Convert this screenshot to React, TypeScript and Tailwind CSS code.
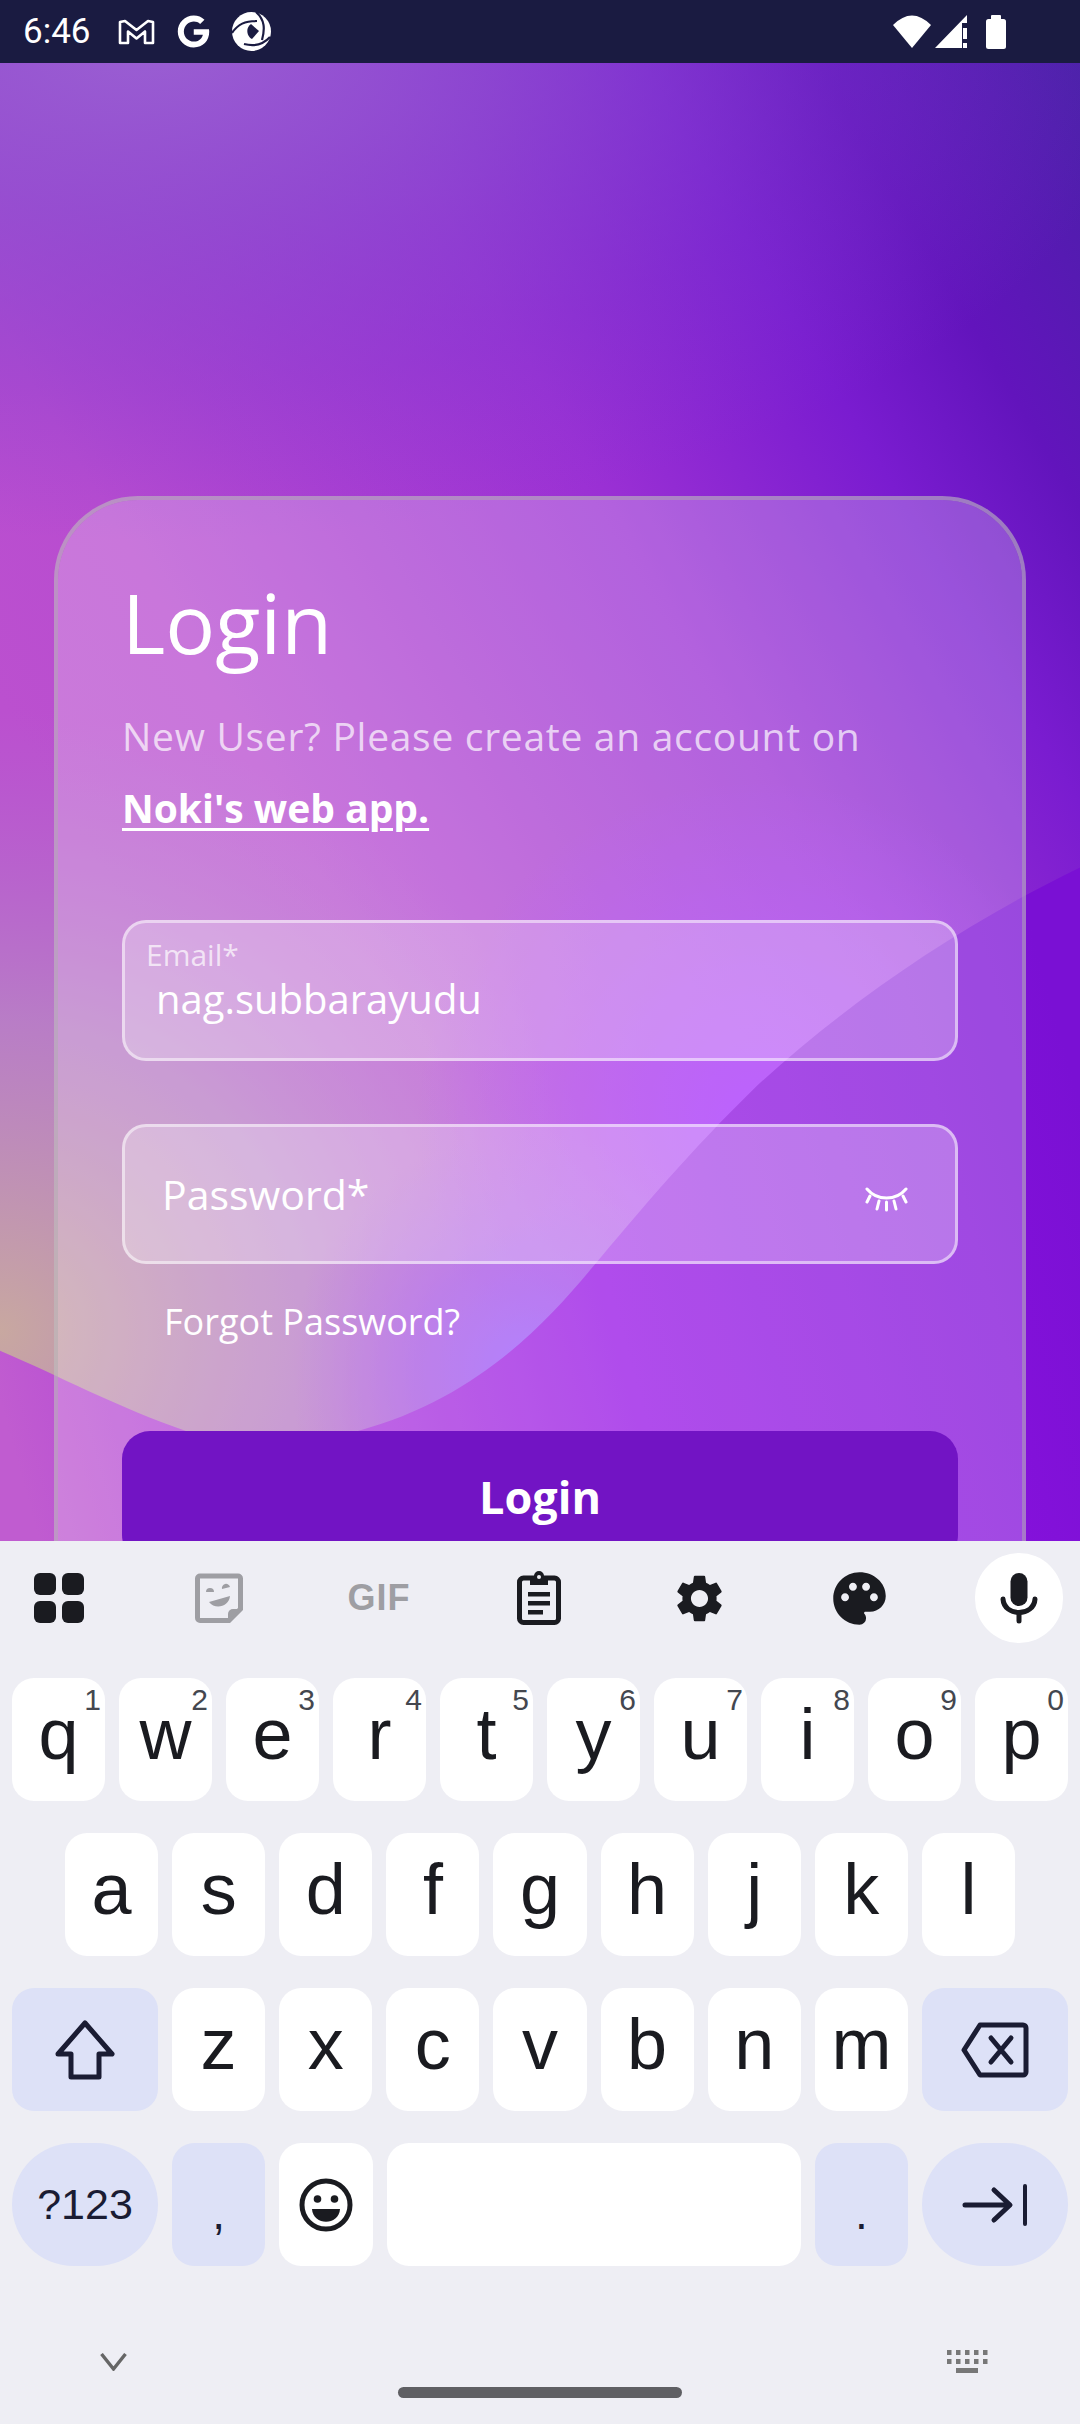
import React from "react";
import { MdPalette, MdSettings } from "react-icons/md";
import { FaGoogle } from "react-icons/fa";

const INK = "#1a1b20";

function Background() {
  return (
    <svg className="absolute inset-0 w-full h-full" viewBox="0 63 1080 1477" preserveAspectRatio="none">
      <defs>
        <linearGradient id="base" gradientUnits="userSpaceOnUse" x1="1080" y1="63" x2="0" y2="700">
          <stop offset="0" stopColor="#4a20a8" />
          <stop offset="0.18" stopColor="#6214bc" />
          <stop offset="0.3" stopColor="#7a1cd0" />
          <stop offset="0.5" stopColor="#9a30d4" />
          <stop offset="0.85" stopColor="#b84cd0" />
          <stop offset="1" stopColor="#bb50cf" />
        </linearGradient>
        <radialGradient id="tl" gradientUnits="userSpaceOnUse" cx="150" cy="40" r="1000" gradientTransform="translate(150 40) scale(1 0.5) translate(-150 -40)">
          <stop offset="0" stopColor="#9a62d2" stopOpacity="0.95" />
          <stop offset="0.35" stopColor="#8c50d0" stopOpacity="0.72" />
          <stop offset="0.7" stopColor="#8040d0" stopOpacity="0.32" />
          <stop offset="1" stopColor="#8040d0" stopOpacity="0" />
        </radialGradient>
        <radialGradient id="violet" gradientUnits="userSpaceOnUse" cx="757" cy="1120" r="340">
          <stop offset="0" stopColor="#a832ff" stopOpacity="1" />
          <stop offset="1" stopColor="#a832ff" stopOpacity="0" />
        </radialGradient>
        <radialGradient id="violet2" gradientUnits="userSpaceOnUse" cx="530" cy="1370" r="240">
          <stop offset="0" stopColor="#9a5cff" stopOpacity="1" />
          <stop offset="0.5" stopColor="#a050f0" stopOpacity="0.6" />
          <stop offset="1" stopColor="#a850e8" stopOpacity="0" />
        </radialGradient>
        <radialGradient id="tan" gradientUnits="userSpaceOnUse" cx="0" cy="1330" r="620">
          <stop offset="0" stopColor="#c8a8a0" stopOpacity="1" />
          <stop offset="0.5" stopColor="#b888c4" stopOpacity="0.8" />
          <stop offset="1" stopColor="#b070d0" stopOpacity="0" />
        </radialGradient>
        <linearGradient id="wave" gradientUnits="userSpaceOnUse" x1="0" y1="1400" x2="1080" y2="1100">
          <stop offset="0" stopColor="#c05cd0" />
          <stop offset="0.55" stopColor="#9714e6" />
          <stop offset="1" stopColor="#7a10d4" />
        </linearGradient>
      </defs>
      <rect x="0" y="63" width="1080" height="1477" fill="url(#base)" />
      <rect x="0" y="63" width="1080" height="1477" fill="url(#tl)" />
      <rect x="0" y="63" width="1080" height="1477" fill="url(#tan)" />
      <rect x="0" y="63" width="1080" height="1477" fill="url(#violet)" />
      <rect x="0" y="63" width="1080" height="1477" fill="url(#violet2)" />
      <path
        d="M1080 867 C960 925 850 1000 757 1085 C690 1150 640 1210 592 1267 C540 1330 470 1400 358 1430 C290 1448 240 1448 186 1430 C120 1408 55 1373 0 1350 L0 1540 L1080 1540 Z"
        fill="url(#wave)"
      />
    </svg>
  );
}

function StatusBar() {
  return (
    <div className="h-[63px] bg-[#1a1b41] flex items-center text-white shrink-0">
      <span className="ml-[23px] w-[68px] font-[Roboto,sans-serif] text-[35px] leading-[40px]">6:46</span>
      <svg className="ml-[27px]" width="37" height="26" viewBox="0 0 37 26" fill="none" stroke="white" strokeWidth="2.6" strokeLinejoin="round">
        <path d="M2 3 L2 24 H10 V12.5 L18.5 19.5 L27 12.5 V24 H35 V3 L30 2 L18.5 11 L7 2 Z" />
      </svg>
      <FaGoogle className="ml-[22px]" size={33} />
      <svg className="ml-[22px]" width="39" height="39" viewBox="0 0 39 39">
        <circle cx="19.5" cy="19.5" r="19.5" fill="white" />
        <path d="M19 12 L27 19 L20 27 C15 25 13 16 19 12 Z" fill="#1a1b41" />
        <path d="M0 21 C6 12 13 9 25 9 M24 0 C33 8 33 17 30 28 M38 25 C30 34 20 34 12 32" fill="none" stroke="#1a1b41" strokeWidth="2.2" />
      </svg>
      <div className="ml-auto flex items-center">
        <svg width="38" height="33" viewBox="0 0 38 33">
          <path d="M0 10 Q19 -9 38 10 L19 33 Z" fill="white" />
        </svg>
        <svg className="ml-[4px]" width="32" height="33" viewBox="0 0 32 33" fill="white">
          <path d="M0 33 L32 0 V8 H27 V33 Z" />
          <rect x="28" y="13" width="4" height="11" />
          <rect x="28" y="28" width="4" height="5" />
        </svg>
        <svg className="ml-[19px] mr-[74px]" width="20" height="34" viewBox="0 0 20 34" fill="white">
          <rect x="5" y="0" width="10" height="6" rx="1" />
          <rect x="0" y="4" width="20" height="30" rx="2.5" />
        </svg>
      </div>
    </div>
  );
}

function Eye() {
  return (
    <svg className="mt-[10px]" width="43" height="25" viewBox="0 0 43 25" fill="none" stroke="white" strokeWidth="3" strokeLinecap="round">
      <path d="M2 2 C12 14 31 14 41 2" />
      <path d="M5 9 L2 15 M14 14 L12 22 M21.5 15 V23 M29 14 L31 22 M38 9 L41 15" />
    </svg>
  );
}

function LoginCard() {
  return (
    <div className="relative mx-[54px] mt-[433px] rounded-[84px] border-4 border-[rgba(190,190,190,0.6)] bg-white/[.24] bg-clip-padding px-[64px] pt-[72px] font-['Open_Sans',sans-serif] text-white h-[1300px]">
      <h1 className="text-[83px] leading-[100px] font-normal">Login</h1>
      <p className="mt-[28px] text-[39px] leading-[72px] font-normal tracking-[0.7px] text-white/70">New User? Please create an account on</p>
      <a className="block text-[39px] leading-[72px] font-bold underline decoration-[3px] underline-offset-[5px]">Noki's web app.</a>
      <div className="mt-[76px] h-[141px] rounded-[24px] border-[3px] border-white/50 bg-white/25 pl-[21px] pt-[14px]">
        <div className="text-[30px] leading-[36px] text-white/70">Email*</div>
        <div className="mt-[2px] ml-[10px] text-[40px] leading-[48px]">nag.subbarayudu</div>
      </div>
      <div className="mt-[63px] h-[140px] rounded-[24px] border-[3px] border-white/50 bg-white/25 pl-[37px] pr-[47px] flex items-center justify-between">
        <span className="text-[41px] leading-[52px]">Password*</span>
        <Eye />
      </div>
      <div className="mt-[36px] ml-[42px] text-[36px] leading-[44px]">Forgot Password?</div>
      <button className="mt-[87px] w-full h-[132px] rounded-[28px] bg-[#7214c4] text-[45px] font-bold text-white">Login</button>
    </div>
  );
}

function Key({ label, hint, className = "" }: { label?: React.ReactNode; hint?: string; className?: string }) {
  return (
    <div className={`relative h-[123px] flex-1 rounded-[22px] bg-white flex items-center justify-center pb-[12px] text-[72px] text-[#1a1b20] ${className}`}>
      {label}
      {hint && <span className="absolute top-[7px] right-[4px] text-[30px] leading-[30px] text-[#44474f]">{hint}</span>}
    </div>
  );
}

function FnKey({ children, className = "" }: { children: React.ReactNode; className?: string }) {
  return <div className={`h-[123px] w-[146px] shrink-0 bg-[#dde1f7] flex items-center justify-center ${className}`}>{children}</div>;
}

function Toolbar() {
  const cell = "w-[88px] h-[90px] flex items-center justify-center";
  return (
    <div className="mt-[12px] pl-[15px] pr-[17px] flex items-center justify-between">
      <div className={cell}>
        <svg width="50" height="50" viewBox="0 0 50 50" fill={INK}>
          <rect x="0" y="0" width="22" height="22" rx="6" />
          <rect x="28" y="0" width="22" height="22" rx="6" />
          <rect x="0" y="28" width="22" height="22" rx="6" />
          <rect x="28" y="28" width="22" height="22" rx="6" />
        </svg>
      </div>
      <div className={cell}>
        <svg width="48" height="50" viewBox="0 0 48 50" fill="none">
          <path d="M5 3 H43 a2.5 2.5 0 0 1 2.5 2.5 V36 L34 47.5 H5 a2.5 2.5 0 0 1 -2.5 -2.5 V5.5 A2.5 2.5 0 0 1 5 3 Z" stroke="#9e9ea3" strokeWidth="5" />
          <path d="M33 47 V41 a5 5 0 0 1 5 -5 H46 Z" fill="#9e9ea3" />
          <path d="M11 19 a4 4 0 0 1 8 0 Z M27 16 a4 4 0 0 1 8 -2 Z M14 29 L35 23 C34 34 20 37 14 29 Z" fill="#9e9ea3" />
        </svg>
      </div>
      <div className={`${cell} font-['Liberation_Sans',sans-serif] font-bold text-[36px] tracking-[1px] text-[#9e9ea3]`}>GIF</div>
      <div className={cell}>
        <svg width="44" height="54" viewBox="0 0 44 54" fill="none">
          <rect x="2.5" y="7" width="39" height="44.5" rx="4" stroke={INK} strokeWidth="5" />
          <path d="M13 5 H17 a5 5 0 0 1 10 0 H31 V14 H13 Z" fill={INK} />
          <circle cx="22" cy="6" r="2" fill="#eeeef4" />
          <rect x="11" y="21" width="22" height="4.5" fill={INK} />
          <rect x="11" y="30" width="22" height="4.5" fill={INK} />
          <rect x="11" y="39" width="15" height="4.5" fill={INK} />
        </svg>
      </div>
      <div className={cell}>
        <MdSettings size={57} color={INK} />
      </div>
      <div className={cell}>
        <MdPalette size={63} color={INK} />
      </div>
      <div className={`${cell} rounded-full bg-white`}>
        <svg width="38" height="52" viewBox="0 0 38 52" fill="none">
          <rect x="10.5" y="1" width="17" height="33" rx="8.5" fill={INK} />
          <path d="M3 27 C4 45 34 45 35 27" stroke={INK} strokeWidth="5" strokeLinecap="round" />
          <path d="M19 42 V49" stroke={INK} strokeWidth="5" strokeLinecap="round" />
        </svg>
      </div>
    </div>
  );
}

function Keyboard() {
  const r1 = ["q", "w", "e", "r", "t", "y", "u", "i", "o", "p"];
  const h1 = ["1", "2", "3", "4", "5", "6", "7", "8", "9", "0"];
  const r2 = ["a", "s", "d", "f", "g", "h", "j", "k", "l"];
  const r3 = ["z", "x", "c", "v", "b", "n", "m"];
  return (
    <div className="flex-1 bg-[#eeeef4] font-['Liberation_Sans',sans-serif]">
      <Toolbar />
      <div className="mt-[35px] flex flex-col gap-[32px]">
        <div className="px-[12px] flex gap-[14px]">
          {r1.map((k, i) => (
            <Key key={k} label={k} hint={h1[i]} />
          ))}
        </div>
        <div className="px-[65px] flex gap-[14px]">
          {r2.map((k) => (
            <Key key={k} label={k} />
          ))}
        </div>
        <div className="px-[12px] flex gap-[14px]">
          <FnKey className="rounded-[22px]">
            <svg width="62" height="60" viewBox="0 0 62 60" fill="none">
              <path d="M31 3 L58 34 H45 V57 H17 V34 H4 Z" stroke="#1a1c33" strokeWidth="5" strokeLinejoin="round" />
            </svg>
          </FnKey>
          {r3.map((k) => (
            <Key key={k} label={k} />
          ))}
          <FnKey className="rounded-[22px]">
            <svg width="68" height="56" viewBox="0 0 68 56" fill="none" stroke="#1a1c33" strokeWidth="5" strokeLinejoin="round">
              <path d="M19 3 H62 a3 3 0 0 1 3 3 V50 a3 3 0 0 1 -3 3 H19 L3 28 Z" />
              <path d="M30 16 L50 40 M50 16 L30 40" strokeLinecap="round" />
            </svg>
          </FnKey>
        </div>
        <div className="px-[12px] flex gap-[14px]">
          <FnKey className="rounded-full text-[43px] text-[#1a1c33]">?123</FnKey>
          <FnKey className="w-auto flex-1 rounded-[22px] text-[46px] text-[#1a1c33] pt-[18px]">,</FnKey>
          <Key label={
            <svg className="mt-[12px]" width="54" height="54" viewBox="0 0 54 54" fill="none">
              <circle cx="27" cy="27" r="24" stroke={INK} strokeWidth="5" />
              <circle cx="18.5" cy="21" r="3.8" fill={INK} />
              <circle cx="35.5" cy="21" r="3.8" fill={INK} />
              <path d="M13 31 H41 C40 48 14 48 13 31 Z" fill={INK} />
            </svg>
          } />
          <div className="h-[123px] w-[414px] shrink-0 rounded-[22px] bg-white" />
          <FnKey className="w-auto flex-1 rounded-[22px] text-[46px] text-[#1a1c33] pt-[18px]">.</FnKey>
          <FnKey className="rounded-full">
            <svg width="66" height="42" viewBox="0 0 66 42" fill="none" stroke="#1a1c33" strokeWidth="5" strokeLinecap="round" strokeLinejoin="round">
              <path d="M3 21 H47 M32 6 L48 21 L32 36" />
              <path d="M63 2 V40" strokeWidth="4" />
            </svg>
          </FnKey>
        </div>
      </div>
      <div className="mt-[84px] pl-[100px] pr-[92px] flex items-center justify-between h-[23px]">
        <svg width="27" height="18" viewBox="0 0 27 18" fill="none" stroke="#666" strokeWidth="3.4">
          <path d="M1.5 1 L13.5 16 L25.5 1" />
        </svg>
        <svg width="41" height="23" viewBox="0 0 41 23" fill="#777">
          {[0, 9, 18, 27, 36].map((x) => (
            <React.Fragment key={x}>
              <rect x={x} y="0" width="4.5" height="5" />
              <rect x={x} y="9" width="4.5" height="5" />
            </React.Fragment>
          ))}
          <rect x="9" y="18" width="22" height="5" />
        </svg>
      </div>
      <div className="mt-[14px] mx-auto w-[284px] h-[11px] rounded-full bg-[#5f5f63]" />
    </div>
  );
}

export default function App() {
  return (
    <div className="w-[1080px] h-[2424px] flex flex-col overflow-hidden">
      <StatusBar />
      <main className="relative h-[1478px] shrink-0 overflow-hidden">
        <Background />
        <LoginCard />
      </main>
      <Keyboard />
    </div>
  );
}
